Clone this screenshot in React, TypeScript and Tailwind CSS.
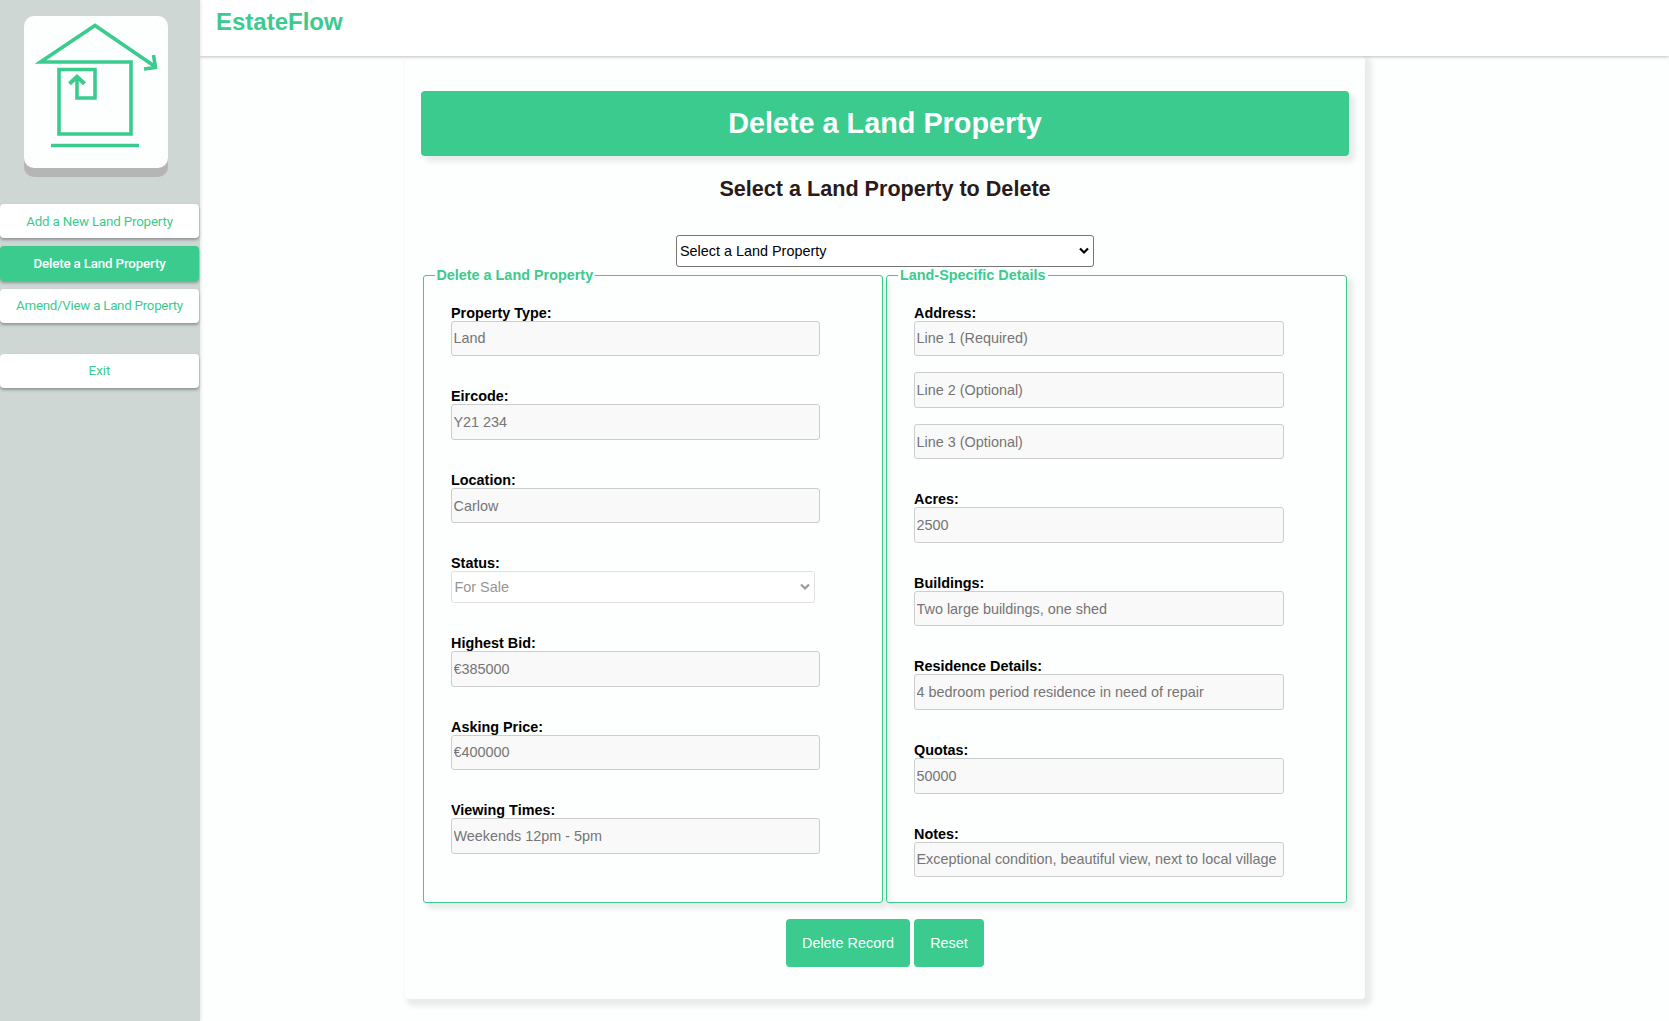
import React from "react";

const SANS = "font-['Liberation_Sans',Arial,sans-serif]";

function Logo() {
  return (
    <div className="ml-6 mt-4 h-[152px] w-36 rounded-[10px] bg-[#fdfffe] shadow-[0_9px_0_#b5b5b5]">
      <svg width="144" height="152" viewBox="0 0 144 152" fill="none" stroke="#3bcb8e" strokeWidth="3.6">
        <path d="M131 50.5L71 9.5L16.5 46H107V118H35V53.5H71V82H53V61" />
        <path d="M129.500 39L131.500 51.5L120 53" />
        <path strokeWidth="4.2" d="M45.500 67.800L53 60.800L60.500 67.800" />
        <path d="M27 129.500H115" />
      </svg>
    </div>
  );
}

function NavButton({ label, className = "", active = false }: { label: string; className?: string; active?: boolean }) {
  return (
    <button
      className={`block w-[199px] rounded font-['Roboto',sans-serif] text-[13.333px] shadow-[0_2px_3px_rgba(0,0,0,0.3)] ${
        active ? "bg-[#3bcb8e] font-medium text-[#fdfffe]" : "bg-white text-[#3bcb8e]"
      } ${className}`}
    >
      {label}
    </button>
  );
}

const INPUT =
  "block h-[35.45px] w-full rounded-[3px] border border-[#cccecd] bg-[#f9f9f9] px-[1.5px] pt-[0.1px] text-[14.4px] placeholder:text-[#757575]";

function Label({ text }: { text: string }) {
  return <label className="block h-4 whitespace-nowrap text-[14.4px] leading-4 font-bold text-black">{text}</label>;
}

function Field({ label, value }: { label: string; value: string }) {
  return (
    <div className="h-[83.65px]">
      <Label text={label} />
      <input className={INPUT} placeholder={value} disabled />
    </div>
  );
}

function Chevron({ color }: { color: string }) {
  return (
    <svg width="10" height="8" viewBox="0 0 10 8" fill="none" stroke={color} strokeWidth="2.2">
      <path d="M1 1.500L5 5.500L9 1.500" />
    </svg>
  );
}

export default function App() {
  return (
    <div className={`flex h-[1021px] w-[1669px] overflow-hidden bg-[#fdfffe] ${SANS}`}>
      <aside className="z-20 w-[200px] shrink-0 bg-[#ced7d4] shadow-[0_0_4px_rgba(0,0,0,0.15)]">
        <Logo />
        <nav>
          <NavButton label="Add a New Land Property" className="mt-9 h-[34px] pt-px tracking-[-0.17px]" />
          <NavButton label="Delete a Land Property" className="mt-2 h-[35px] tracking-[-0.16px]" active />
          <NavButton label="Amend/View a Land Property" className="mt-2 h-[34px] tracking-[-0.26px]" />
          <NavButton label="Exit" className="mt-[31px] h-[34px]" />
        </nav>
      </aside>
      <div className="flex min-w-0 flex-1 flex-col">
        <header className="relative z-10 h-14 shrink-0 bg-white pt-[7px] pl-4 shadow-[0_1px_3px_rgba(0,0,0,0.25)]">
          <span className="block text-2xl leading-[30px] font-bold text-[#3bcb8e]">EstateFlow</span>
        </header>
        <main className="ml-[205px] h-[943px] w-[960px] shrink-0 rounded bg-[#fdfffe] px-4 pt-[35px] shadow-[4px_4px_5px_3px_rgba(0,0,0,0.08)]">
          <h1 className="flex h-[65px] items-center justify-center rounded bg-[#3bcb8e] text-[28.8px] font-bold text-[#fdfffe] shadow-[5px_5px_5px_1px_rgba(0,0,0,0.08)]">
            Delete a Land Property
          </h1>
          <h2 className="mt-[19px] text-center text-[21.6px] leading-7 font-bold text-[#2a1a1a]">Select a Land Property to Delete</h2>
          <div className="mx-auto mt-8 flex h-8 w-[418px] items-center justify-between rounded-[3px] border border-[#767676] bg-white pr-1 pl-[3px] text-[14.4px] text-black">
            <span className="pt-[2px]">Select a Land Property</span>
            <Chevron color="#000" />
          </div>
          <form>
            <div className="ml-[2px] flex gap-[3px]">
              <fieldset className="h-[636px] w-[460px] rounded-[3px] border border-[#3bcb8e] bg-[#fdfffe] pl-[27px] shadow-[5px_5px_5px_1px_rgba(0,0,0,0.08)]">
                <legend className="-ml-4 h-4 px-[1.4px] text-[14.4px] leading-4 font-bold text-[#3bcb8e]">
                  Delete a Land Property
                </legend>
                <div className="w-[369px] pt-[21.5px]">
                  <Field label="Property Type:" value="Land" />
                  <Field label="Eircode:" value="Y21 234" />
                  <Field label="Location:" value="Carlow" />
                  <div className="h-[79.65px]">
                    <Label text="Status:" />
                    <div className="flex h-8 w-[364px] items-center justify-between rounded-[3px] border border-[#dfe1e0] bg-white pr-1 pl-[2.5px] text-[14.4px] text-[#969696]">
                      <span className="pt-px">For Sale</span>
                      <Chevron color="#999" />
                    </div>
                  </div>
                  <Field label="Highest Bid:" value="€385000" />
                  <Field label="Asking Price:" value="€400000" />
                  <Field label="Viewing Times:" value="Weekends 12pm - 5pm" />
                </div>
              </fieldset>
              <fieldset className="h-[636px] w-[461px] rounded-[3px] border border-[#3bcb8e] pl-[27px] shadow-[5px_5px_5px_1px_rgba(0,0,0,0.08)]">
                <legend className="-ml-4 h-4 px-[2px] text-[14.4px] leading-4 font-bold text-[#3bcb8e]">
                  Land-Specific Details
                </legend>
                <div className="w-[370px] pt-[21.5px]">
                  <Label text="Address:" />
                  <div className="flex h-[170.65px] flex-col gap-[16.2px]">
                    <input className={INPUT} placeholder="Line 1 (Required)" disabled />
                    <input className={INPUT} placeholder="Line 2 (Optional)" disabled />
                    <input className={INPUT} placeholder="Line 3 (Optional)" disabled />
                  </div>
                  <Field label="Acres:" value="2500" />
                  <Field label="Buildings:" value="Two large buildings, one shed" />
                  <Field label="Residence Details:" value="4 bedroom period residence in need of repair" />
                  <Field label="Quotas:" value="50000" />
                  <Field label="Notes:" value="Exceptional condition, beautiful view, next to local village" />
                </div>
              </fieldset>
            </div>
            <div className="mt-4 flex justify-center gap-1 text-[14.4px] text-[#fdfffe]">
              <button type="button" className="h-12 w-[124px] rounded bg-[#3bcb8e] pt-[2px]">Delete Record</button>
              <button type="button" className="h-12 w-[70px] rounded bg-[#3bcb8e] pt-[2px]">Reset</button>
            </div>
          </form>
        </main>
      </div>
    </div>
  );
}
